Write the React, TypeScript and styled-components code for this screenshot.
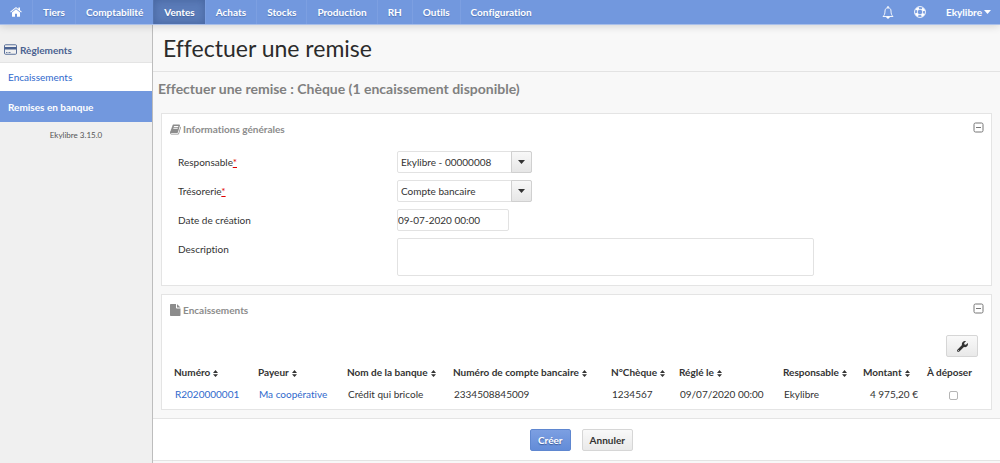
import React from "react";
import styled, { createGlobalStyle } from "styled-components";
import { FaWrench } from "react-icons/fa";

const GlobalStyle = createGlobalStyle`
  * { box-sizing: border-box; }
  body {
    margin: 0;
    background: #f8f8f8;
    color: #333;
    font-family: Lato, "Liberation Sans", sans-serif;
    font-size: 10px;
    line-height: 16px;
    font-variant-ligatures: none;
  }
  a { color: #2f69cc; text-decoration: none; }
  button, input, select, textarea { font: inherit; color: inherit; margin: 0; }
`;

const Page = styled.div`
  min-height: 100vh;
  display: flex;
  flex-direction: column;
`;

const TopBar = styled.header`
  display: flex;
  justify-content: space-between;
  height: 25px;
  background: #7298de;
  border-bottom: 1px solid #a9bfe9;
  box-shadow: 0 1px 8px rgba(0, 0, 0, 0.16);
  position: relative;
  z-index: 1;
`;

const Menu = styled.nav`
  display: flex;
`;

const MenuLink = styled.a<{ $active?: boolean }>`
  display: flex;
  align-items: center;
  padding: 0 10px;
  color: #fff;
  font-weight: bold;
  border-left: 1px solid ${(p) => (p.$active ? "#5474af" : "#7c9fe1")};
  background: ${(p) => (p.$active ? "#5b7cb9" : "transparent")};
  box-shadow: ${(p) => (p.$active ? "inset 0 0 8px rgba(30, 55, 110, 0.35)" : "none")};
  text-shadow: 0 1px 1px rgba(40, 70, 130, 0.4);
  &:first-child { border-left: 0; }
`;

const Tools = styled.div`
  display: flex;
  align-items: center;
  gap: 20px;
  padding-right: 9px;
`;

const ToolButton = styled.button`
  display: flex;
  align-items: center;
  gap: 2px;
  padding: 0;
  border: 0;
  background: none;
  color: #fff;
  font-weight: bold;
`;

const Body = styled.div`
  flex: 1;
  display: flex;
`;

const Sidebar = styled.aside`
  flex: 0 0 153px;
  background: #f0f0f0;
  border-right: 1px solid #bdbdbd;
`;

const SideTitle = styled.h2`
  display: flex;
  align-items: center;
  gap: 3px;
  height: 38px;
  margin: 0;
  padding: 12px 4px 0;
  color: #4a6291;
  font-size: 10px;
  border-bottom: 1px solid #e4e4e4;
`;

const SideLink = styled.a<{ $active?: boolean }>`
  display: flex;
  align-items: center;
  height: ${(p) => (p.$active ? 31 : 28)}px;
  padding: 0 8px;
  font-weight: ${(p) => (p.$active ? "bold" : "normal")};
  color: ${(p) => (p.$active ? "#fff" : "#2f69cc")};
  background: ${(p) => (p.$active ? "#7298de" : "#fff")};
`;

const Version = styled.p`
  margin: 5px 0;
  font-size: 8px;
  color: #555;
  text-align: center;
`;

const Main = styled.main`
  flex: 1;
  min-width: 0;
`;

const PageTitle = styled.h1`
  margin: 0;
  padding: 8px 10px;
  font-size: 23px;
  line-height: 30px;
  font-weight: normal;
  color: #2b2b2b;
  border-bottom: 1px solid #e3e3e3;
`;

const FormTitle = styled.h2`
  margin: 0;
  padding: 6px 5px;
  font-size: 14px;
  line-height: 22px;
  color: #808080;
`;

const Panels = styled.div`
  display: flex;
  flex-direction: column;
  gap: 8px;
  padding: 7px 8px 8px;
`;

const Panel = styled.section`
  background: #fff;
  border: 1px solid #e4e4e4;
  padding: 6px 7px 4px 8px;
`;

const PanelHead = styled.div`
  display: flex;
  justify-content: space-between;
  align-items: flex-start;
`;

const PanelTitle = styled.h3`
  display: flex;
  align-items: center;
  gap: 2px;
  margin: 0;
  font-size: 10px;
  line-height: 18px;
  color: #8c8c8c;
`;

const FoldButton = styled.button`
  display: flex;
  padding: 2px 0;
  border: 0;
  background: none;
  color: #777;
`;

const Fields = styled.div`
  display: flex;
  flex-direction: column;
  gap: 7px;
  padding: 13px 8px 5px;
`;

const Field = styled.div`
  display: grid;
  grid-template-columns: 219px 1fr;
  align-items: start;
  line-height: 22px;
`;

const Required = styled.abbr`
  color: #e00000;
  text-decoration: underline;
`;

const Combo = styled.div`
  display: grid;
  grid-template-columns: 1fr 21px;
  grid-template-rows: 22px;
  width: 135px;
  line-height: 16px;
`;

const Select = styled.select`
  grid-area: 1 / 1 / 2 / 3;
  appearance: none;
  height: 22px;
  padding: 0 24px 0 3px;
  border: 1px solid #e2e2e2;
  border-radius: 2px;
  background: #fff;
`;

const ComboArrow = styled.span`
  grid-area: 1 / 2 / 2 / 3;
  display: flex;
  align-items: center;
  justify-content: center;
  border: 1px solid #d0d0d0;
  border-radius: 0 2px 2px 0;
  background: linear-gradient(#f8f8f8, #e6e6e6);
  pointer-events: none;
`;

const TextInput = styled.input`
  width: 112px;
  height: 22px;
  padding: 0;
  border: 1px solid #e2e2e2;
  border-radius: 2px;
  background: #fff;
`;

const TextArea = styled.textarea`
  display: block;
  width: 72%;
  height: 38px;
  padding: 2px;
  border: 1px solid #e2e2e2;
  border-radius: 2px;
  background: #fff;
  resize: none;
`;

const Button = styled.button<{ $primary?: boolean }>`
  display: flex;
  align-items: center;
  justify-content: center;
  height: 22px;
  padding: 0 7px;
  font-weight: bold;
  border-radius: 2px;
  border: 1px solid ${(p) => (p.$primary ? "#5f87d0" : "#d6d6d6")};
  color: ${(p) => (p.$primary ? "#fff" : "#333")};
  background: ${(p) =>
    p.$primary ? "linear-gradient(#7c9fe2, #638cd8)" : "linear-gradient(#f9f9f9, #e9e9e9)"};
  text-shadow: ${(p) => (p.$primary ? "0 1px 1px rgba(30, 55, 110, 0.6)" : "none")};
`;

const WrenchButton = styled(Button)`
  width: 32px;
`;

const TableTools = styled.div`
  display: flex;
  justify-content: flex-end;
  padding: 16px 6px 4px;
`;

const Table = styled.table`
  width: 100%;
  table-layout: fixed;
  border-collapse: collapse;
  th, td { white-space: nowrap; text-align: left; }
  th { height: 22px; padding: 0 4px; }
  td { height: 22px; padding: 0 5px; }
`;

const NumberCell = styled.td`
  && { text-align: right; }
`;

const CheckCell = styled.td`
  && { text-align: center; }
`;

const Check = styled.input`
  appearance: none;
  display: inline-block;
  width: 9px;
  height: 9px;
  border: 1px solid #b5b5b5;
  border-radius: 2px;
  background: #fff;
  vertical-align: middle;
`;

const SortMark = styled.svg`
  margin-left: 3px;
  vertical-align: -1px;
`;

const Actions = styled.div`
  display: flex;
  justify-content: center;
  gap: 11px;
  padding: 10px 0 9px 10px;
  background: #fff;
  border-top: 1px solid #e4e4e4;
  border-bottom: 1px solid #e4e4e4;
`;

const HomeIcon = () => (
  <svg width="12" height="10" viewBox="0 0 24 20" fill="#fff" aria-hidden="true">
    <path d="M12 4.600 4 11.200v7.300q0 1 1 1h5v-6h4v6h5q1 0 1-1v-7.300z" />
    <path d="M23.600 9.600 20 6.600V1h-3.200v3L13.300 1q-1.300-1-2.600 0L.4 9.600l1.200 1.500L12 2.700l10.400 8.400z" />
  </svg>
);

const BellIcon = () => (
  <svg width="12" height="13" viewBox="0 0 24 26" fill="none" stroke="#fff" strokeWidth="1.800" aria-hidden="true">
    <path d="M12 3.500c-4 0-6 3-6 6.500 0 6-1.500 8.500-4 11h20c-2.500-2.500-4-5-4-11 0-3.500-2-6.500-6-6.500z" strokeLinejoin="round" />
    <path d="M12 1v2.500" strokeWidth="2.500" strokeLinecap="round" />
    <path d="M9.500 22a2.500 2.500 0 0 0 5 0z" fill="#fff" />
  </svg>
);

const RingIcon = () => (
  <svg width="12" height="12" viewBox="0 0 24 24" fill="none" stroke="#fff" aria-hidden="true">
    <circle cx="12" cy="12" r="10.900" strokeWidth="1.800" />
    <circle cx="12" cy="12" r="5.600" strokeWidth="1.800" />
    <circle cx="12" cy="12" r="8.200" strokeWidth="4.800" strokeDasharray="6.440 6.440" strokeDashoffset="-3.220" />
  </svg>
);

const CardIcon = () => (
  <svg width="13" height="11" viewBox="0 0 26 22" aria-hidden="true">
    <rect x="1" y="1.500" width="24" height="19" rx="2" fill="none" stroke="#4a6291" strokeWidth="1.800" />
    <path d="M1 6h24v5H1z" fill="#4a6291" />
    <path d="M4 17h3M9 17h4" stroke="#4a6291" strokeWidth="1.600" />
  </svg>
);

const BookIcon = () => (
  <svg width="11" height="11" viewBox="0 64 1664 1664" fill="#8c8c8c" aria-hidden="true">
    <path d="M1639 478q40 57 18 129l-275 906q-19 64-76.500 107.500t-122.500 43.500h-923q-77 0-148.500-53.500t-99.500-131.500q-24-67-2-127 0-4 3-27t4-37q1-8-3-21.500t-3-19.500q2-11 8-21t16.500-23.500 16.500-23.500q23-38 45-91.500t30-91.500q3-10 .5-30t-.5-28q3-11 17-28t17-23q21-36 42-92t25-90q1-9-2.500-32t.5-28q4-13 22-30.500t22-22.500q19-26 42.500-84.500t27.500-96.500q1-8-3-25.500t-2-26.500q2-8 9-18t18-23 17-21q8-12 16.500-30.500t15-35 16-36 19.500-32 26.500-23.500 36-11.500 47.500 5.500l-1 3q38-9 51-9h761q74 0 114 56t18 130l-274 906q-36 119-71.500 153.500t-128.500 34.500h-869q-27 0-38 15-11 16-1 43 24 70 144 70h923q29 0 56-15.500t35-41.500l300-987q7-22 5-57 38 15 59 43zm-1064 2q-4 13 2 22.500t20 9.500h608q13 0 25.500-9.500t16.500-22.500l21-64q4-13-2-22.500t-20-9.500h-608q-13 0-25.500 9.500t-16.500 22.500zm-83 256q-4 13 2 22.500t20 9.500h608q13 0 25.500-9.500t16.500-22.500l21-64q4-13-2-22.500t-20-9.500h-608q-13 0-25.500 9.500t-16.500 22.500z" />
  </svg>
);

const FileIcon = () => (
  <svg width="11" height="12" viewBox="0 0 22 24" fill="#8c8c8c" aria-hidden="true">
    <path d="M1.500 0H12v7.500q0 1.500 1.500 1.500H21v13.500q0 1.500-1.500 1.500h-18Q0 24 0 22.500v-21Q0 0 1.500 0z" />
    <path d="M14 .4q.6.300 1 .7l5 4.900q.500.500.700 1H14z" />
  </svg>
);

const FoldIcon = () => (
  <svg width="11" height="11" viewBox="0 0 11 11" fill="none" stroke="currentColor" aria-hidden="true">
    <rect x="1" y="1" width="9" height="9" rx="1.500" />
    <path d="M3 5.500h5" />
  </svg>
);

const Caret = () => (
  <svg width="7" height="4" viewBox="0 0 7 4" fill="currentColor" aria-hidden="true">
    <path d="M0 0h7L3.500 4z" />
  </svg>
);

const SortIcon = () => (
  <SortMark width="5" height="7" viewBox="0 0 10 14" fill="#333" aria-hidden="true">
    <path d="M0 6h10L5 0zM0 8.500h10L5 14z" />
  </SortMark>
);

const menu = ["Tiers", "Comptabilité", "Ventes", "Achats", "Stocks", "Production", "RH", "Outils", "Configuration"];

const columns = [
  { label: "Numéro", share: 84 },
  { label: "Payeur", share: 89 },
  { label: "Nom de la banque", share: 106 },
  { label: "Numéro de compte bancaire", share: 158 },
  { label: "N°Chèque", share: 68 },
  { label: "Réglé le", share: 104 },
  { label: "Responsable", share: 80 },
  { label: "Montant", share: 64 },
  { label: "À déposer", share: 61, fixed: true },
];
const total = columns.reduce((sum, c) => sum + c.share, 0);

export default function App() {
  return (
    <Page>
      <GlobalStyle />
      <TopBar>
        <Menu>
          <MenuLink href="#" aria-label="Accueil"><HomeIcon /></MenuLink>
          {menu.map((item) => (
            <MenuLink key={item} href="#" $active={item === "Ventes"}>{item}</MenuLink>
          ))}
        </Menu>
        <Tools>
          <ToolButton aria-label="Notifications"><BellIcon /></ToolButton>
          <ToolButton aria-label="Aide"><RingIcon /></ToolButton>
          <ToolButton>Ekylibre<Caret /></ToolButton>
        </Tools>
      </TopBar>
      <Body>
        <Sidebar>
          <SideTitle><CardIcon />Règlements</SideTitle>
          <SideLink href="#">Encaissements</SideLink>
          <SideLink href="#" $active>Remises en banque</SideLink>
          <Version>Ekylibre 3.15.0</Version>
        </Sidebar>
        <Main>
          <PageTitle>Effectuer une remise</PageTitle>
          <FormTitle>Effectuer une remise : Chèque (1 encaissement disponible)</FormTitle>
          <Panels>
            <Panel>
              <PanelHead>
                <PanelTitle><BookIcon />Informations générales</PanelTitle>
                <FoldButton aria-label="Replier"><FoldIcon /></FoldButton>
              </PanelHead>
              <Fields>
                <Field>
                  <label htmlFor="responsible">Responsable<Required>*</Required></label>
                  <Combo>
                    <Select id="responsible"><option>Ekylibre - 00000008</option></Select>
                    <ComboArrow><Caret /></ComboArrow>
                  </Combo>
                </Field>
                <Field>
                  <label htmlFor="cash">Trésorerie<Required>*</Required></label>
                  <Combo>
                    <Select id="cash"><option>Compte bancaire</option></Select>
                    <ComboArrow><Caret /></ComboArrow>
                  </Combo>
                </Field>
                <Field>
                  <label htmlFor="created">Date de création</label>
                  <TextInput id="created" defaultValue="09-07-2020 00:00" />
                </Field>
                <Field>
                  <label htmlFor="description">Description</label>
                  <TextArea id="description" />
                </Field>
              </Fields>
            </Panel>
            <Panel>
              <PanelHead>
                <PanelTitle><FileIcon />Encaissements</PanelTitle>
                <FoldButton aria-label="Replier"><FoldIcon /></FoldButton>
              </PanelHead>
              <TableTools>
                <WrenchButton aria-label="Options de la liste"><FaWrench size={11} /></WrenchButton>
              </TableTools>
              <Table>
                <colgroup>
                  {columns.map((c) => (
                    <col key={c.label} style={{ width: `${(c.share / total) * 100}%` }} />
                  ))}
                </colgroup>
                <thead>
                  <tr>
                    {columns.map((c) => (
                      <th key={c.label} scope="col">{c.label}{!c.fixed && <SortIcon />}</th>
                    ))}
                  </tr>
                </thead>
                <tbody>
                  <tr>
                    <td><a href="#">R2020000001</a></td>
                    <td><a href="#">Ma coopérative</a></td>
                    <td>Crédit qui bricole</td>
                    <td>2334508845009</td>
                    <td>1234567</td>
                    <td>09/07/2020 00:00</td>
                    <td>Ekylibre</td>
                    <NumberCell>4 975,20 €</NumberCell>
                    <CheckCell><Check type="checkbox" aria-label="À déposer" /></CheckCell>
                  </tr>
                </tbody>
              </Table>
            </Panel>
          </Panels>
          <Actions>
            <Button $primary>Créer</Button>
            <Button>Annuler</Button>
          </Actions>
        </Main>
      </Body>
    </Page>
  );
}
